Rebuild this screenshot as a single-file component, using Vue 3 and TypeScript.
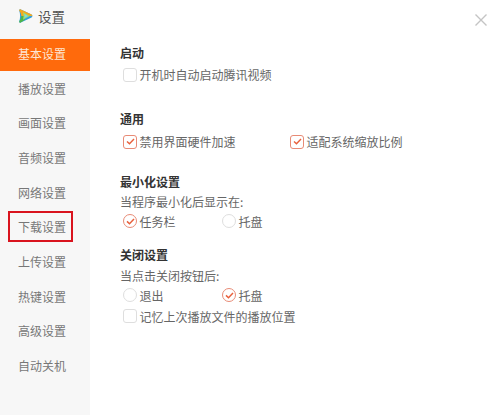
<script setup lang="ts">
const navItems: string[] = ['基本设置', '播放设置', '画面设置', '音频设置', '网络设置', '下载设置', '上传设置', '热键设置', '高级设置', '自动关机']
</script>

<template>
  <div class="page">
    <aside class="side">
      <div class="brand">
        <svg class="logo" width="15" height="14" viewBox="0 0 15 14">
          <path d="M1.2 1.6 Q1.2 0 2.8 0.4 L13.6 5.4 Q15.2 7 13.6 8.6 L2.8 13.6 Q1.2 14 1.2 12.4 Q3 7 1.2 1.6 Z" fill="#2f9fe0" />
          <path d="M1.2 1.6 Q1.2 0 2.8 0.4 L13.6 5.4 Q14.4 6.2 14.4 7 L3.4 7 Q3 4 1.2 1.6 Z" fill="#f4a91f" />
          <path d="M1.2 12.4 Q3 9.5 3.4 7 L7 7 L6.5 11 L2.8 13.6 Q1.2 14 1.2 12.4 Z" fill="#4fb54a" />
          <path d="M5 3.2 L12 7 L5 10.8 Q6.2 7 5 3.2 Z" fill="#9fdc6a" />
          <path d="M6.4 5 L10 7 L6.4 9 Q7 7 6.4 5 Z" fill="#7fd4ea" />
        </svg>
        <span>设置</span>
      </div>
      <nav class="nav">
        <div
          v-for="(item, i) in navItems"
          :key="item"
          class="nav-item"
          :class="{ active: i === 0, marked: i === 5 }"
        >{{ item }}</div>
      </nav>
    </aside>

    <main class="content">
      <svg class="close" width="12" height="12" viewBox="0 0 12 12">
        <path d="M0.5 0.5 L11.5 11.5 M11.5 0.5 L0.5 11.5" stroke="#c4c4c4" stroke-width="1.4" fill="none" />
      </svg>

      <section class="group first">
        <h3>启动</h3>
        <label class="opt"><i class="box"></i>开机时自动启动腾讯视频</label>
      </section>

      <section class="group second">
        <h3>通用</h3>
        <div class="row">
          <label class="opt wide">
            <i class="box on"><svg width="9" height="7" viewBox="0 0 9 7"><path d="M1 3.4 L3.5 5.8 L8 1" stroke="#e8603c" stroke-width="1.4" fill="none" /></svg></i>禁用界面硬件加速
          </label>
          <label class="opt"><i class="box on"><svg width="9" height="7" viewBox="0 0 9 7"><path d="M1 3.4 L3.5 5.8 L8 1" stroke="#e8603c" stroke-width="1.4" fill="none" /></svg></i>适配系统缩放比例</label>
        </div>
      </section>

      <section class="group third">
        <h3>最小化设置</h3>
        <p>当程序最小化后显示在:</p>
        <div class="row">
          <label class="opt radio-col"><i class="radio on"><svg width="9" height="7" viewBox="0 0 9 7"><path d="M1 3.4 L3.5 5.8 L8 1" stroke="#e8603c" stroke-width="1.5" fill="none" /></svg></i>任务栏</label>
          <label class="opt"><i class="radio"></i>托盘</label>
        </div>
      </section>

      <section class="group fourth">
        <h3>关闭设置</h3>
        <p>当点击关闭按钮后:</p>
        <div class="row">
          <label class="opt radio-col"><i class="radio"></i>退出</label>
          <label class="opt"><i class="radio on"><svg width="9" height="7" viewBox="0 0 9 7"><path d="M1 3.4 L3.5 5.8 L8 1" stroke="#e8603c" stroke-width="1.5" fill="none" /></svg></i>托盘</label>
        </div>
        <label class="opt last"><i class="box"></i>记忆上次播放文件的播放位置</label>
      </section>
    </main>
  </div>
</template>

<style scoped>
.page {
  display: flex;
  width: 500px;
  height: 415px;
  overflow: hidden;
  background: #fff;
  color: #666;
  font-family: "Noto Sans CJK SC", "Liberation Sans", sans-serif;
  font-size: 12px;
}
.side {
  width: 90px;
  flex: none;
  background: #f7f7f7;
}
.brand {
  display: flex;
  align-items: center;
  gap: 5px;
  height: 32px;
  margin-bottom: 7px;
  padding-left: 18px;
  font-size: 13.5px;
  color: #555;
}
.logo {
  flex: none;
}
.nav {
  display: flex;
  flex-direction: column;
  gap: 3.7px;
}
.nav-item {
  height: 31px;
  line-height: 31px;
  padding-left: 18px;
  color: #777;
}
.nav-item.active {
  height: 32px;
  line-height: 29px;
  margin-bottom: -2.2px;
  background: #ff6a0c;
  color: #fde6d4;
}
.nav-item.marked {
  margin: -0.5px 0 0.5px 8px;
  width: 65px;
  padding-left: 8px;
  box-sizing: border-box;
  border: 2px solid #d9141e;
  line-height: 27px;
}
.content {
  position: relative;
  flex: 1;
  padding-left: 30px;
}
.close {
  position: absolute;
  top: 14px;
  right: 13px;
}
.group h3 {
  margin: 0;
  font-size: 12px;
  line-height: 16px;
  font-weight: 700;
  color: #333;
}
.group p {
  margin: 0;
  line-height: 16px;
}
.first { padding-top: 45px; }
.second { padding-top: 27px; }
.third { padding-top: 23px; }
.fourth { padding-top: 16.5px; }
.first .opt { margin-top: 4px; }
.second .opt { margin-top: 5px; }
.third p { margin-top: 4px; }
.fourth p { margin-top: 5px; }
.row { display: flex; }
.third .row, .fourth .row { margin-top: 1.5px; }
.opt {
  display: flex;
  align-items: center;
  gap: 2.5px;
  height: 19px;
}
.wide { width: 167px; }
.radio-col { width: 99px; }
.fourth .last { margin-top: 2px; }
.box, .radio {
  display: flex;
  align-items: center;
  justify-content: center;
  flex: none;
  width: 14px;
  height: 14px;
  box-sizing: border-box;
  margin-left: 3px;
  border: 1px solid #dedede;
  background: #fff;
}
.box { border-radius: 3px; }
.radio { border-radius: 50%; }
.on { border-color: #e88b76; }
</style>
